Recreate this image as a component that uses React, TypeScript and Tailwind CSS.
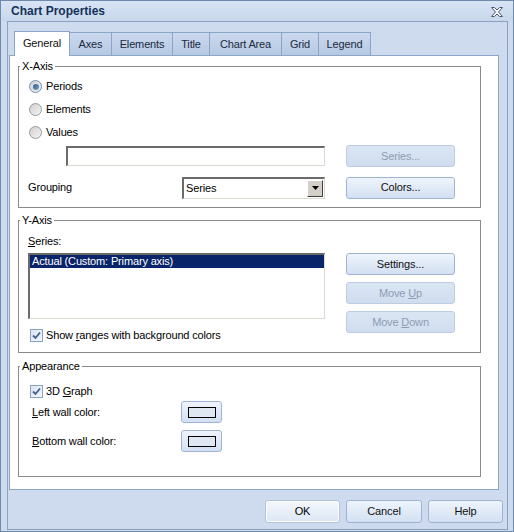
import React from "react";

const font = "font-['Liberation_Sans',Arial,sans-serif]";

function Btn({
  children,
  disabled,
  className = "",
}: {
  children: React.ReactNode;
  disabled?: boolean;
  className?: string;
}) {
  const look = disabled
    ? "border-[#bccce2] bg-linear-to-b from-[#dbe6f4] to-[#d0ddef] text-[#8d9cb2]"
    : "border-[#9fb4d3] bg-linear-to-b from-[#eef4fc] to-[#d3e0f2] text-[#111]";
  return (
    <div
      className={`flex h-[22px] items-center justify-center rounded-[3px] border ${look} ${className}`}
    >
      {children}
    </div>
  );
}

function Radio({ checked }: { checked?: boolean }) {
  return (
    <span
      className={`flex h-[13px] w-[13px] items-center justify-center rounded-full border ${
        checked ? "border-[#6f8db3]" : "border-[#9a9a9a]"
      } bg-linear-to-br from-[#cfcfcf] to-[#f4f4f4]`}
    >
      {checked && (
        <span className="h-[6px] w-[6px] rounded-full bg-linear-to-br from-[#2f5a8c] to-[#7ea2c9]" />
      )}
    </span>
  );
}

function Check() {
  return (
    <span className="flex h-[13px] w-[13px] items-center justify-center border border-[#8ea4c2] bg-linear-to-br from-[#d9e3f0] to-[#f4f7fb]">
      <svg width="9" height="9" viewBox="0 0 9 9">
        <path d="M1 4.5 L3.5 7 L8 1.5" fill="none" stroke="#40618f" strokeWidth="1.8" />
      </svg>
    </span>
  );
}

function Group({
  title,
  className = "",
  children,
}: {
  title: string;
  className?: string;
  children: React.ReactNode;
}) {
  return (
    <div className={`relative ml-[8px] w-[463px] border border-[#8a8a8a] ${className}`}>
      <span className="absolute -top-[7px] left-[1px] bg-white px-[2px] leading-[13px]">
        {title}
      </span>
      {children}
    </div>
  );
}

function ColorSwatch() {
  return (
    <div className="flex h-[22px] w-[41px] items-center justify-center rounded-[3px] border border-[#9fb4d3] bg-linear-to-b from-[#eef4fc] to-[#d3e0f2]">
      <span className="h-[11px] w-[28px] border border-black bg-[#dfe7f3]" />
    </div>
  );
}

const tabs: { label: string; w: string }[] = [
  { label: "General", w: "w-[56px]" },
  { label: "Axes", w: "w-[43px]" },
  { label: "Elements", w: "w-[62px]" },
  { label: "Title", w: "w-[38px]" },
  { label: "Chart Area", w: "w-[73px]" },
  { label: "Grid", w: "w-[38px]" },
  { label: "Legend", w: "w-[53px]" },
];

export default function App() {
  return (
    <div
      className={`${font} flex h-[532px] w-[514px] flex-col border border-[#6f89ad] bg-[#cedbee] text-[11px] tracking-[-0.15px] text-black`}
    >
      {/* title bar */}
      <div className="flex h-[20px] items-center justify-between bg-linear-to-b from-[#d8e4f4] to-[#c8d7ec] pl-[10px] pr-[10px]">
        <span className="text-[12px] font-bold tracking-normal text-[#15315a]">Chart Properties</span>
        <svg width="12" height="10" viewBox="0 0 12 10" className="mt-[1px]">
          <polygon
            points="0.5,0.5 3.5,0.5 6,3 8.5,0.5 11.5,0.5 7.5,5 11.5,9.5 8.5,9.5 6,7 3.5,9.5 0.5,9.5 4.5,5"
            fill="#f4f6f9"
            stroke="#4b5a70"
            strokeWidth="1"
          />
        </svg>
      </div>

      {/* dialog frame */}
      <div className="mb-[1px] ml-[6px] mr-[5px] flex flex-1 flex-col border border-[#8aa1c2]">
        {/* tab strip */}
        <div className="flex h-[33px] items-end pl-[6px]">
          {tabs.map((t, i) =>
            i === 0 ? (
              <div
                key={t.label}
                className={`${t.w} relative z-10 -mb-px flex h-[25px] items-center justify-center border border-b-0 border-[#8ba5c9] bg-white pb-[1px] text-[#111]`}
              >
                {t.label}
              </div>
            ) : (
              <div
                key={t.label}
                className={`${t.w} -ml-px flex h-[23px] items-center justify-center border border-b-0 border-[#8ba5c9] bg-linear-to-b from-[#cad9ee] to-[#b6c9e4] text-[#1a2a40]`}
              >
                {t.label}
              </div>
            )
          )}
        </div>

        {/* tab page */}
        <div className="ml-[1px] mr-[8px] h-[435px] border border-[#8ba5c9] bg-white">
          {/* X-Axis */}
          <Group title="X-Axis" className="mt-[10px] h-[142px]">
            <div className="pt-[8px]">
              {[
                { l: "Periods", c: true },
                { l: "Elements", c: false },
                { l: "Values", c: false },
              ].map((r) => (
                <div key={r.l} className="flex h-[23px] items-center gap-[4px] pl-[10px]">
                  <Radio checked={r.c} />
                  <span>{r.l}</span>
                </div>
              ))}
            </div>
            <div className="mt-[1px] flex h-[22px] items-center pl-[9px]">
              <div className="ml-[38px] h-[20px] w-[259px] border-l-2 border-t-2 border-b border-r border-l-[#6b6b6b] border-t-[#6b6b6b] border-b-[#dcd9d0] border-r-[#dcd9d0] bg-white" />
              <Btn disabled className="ml-[21px] w-[109px]">
                Series...
              </Btn>
            </div>
            <div className="mt-[9px] flex h-[23px] items-center pl-[9px]">
              <span className="w-[154px]">Grouping</span>
              <div className="flex h-[22px] w-[143px] items-stretch border-l-2 border-t-2 border-b border-r border-l-[#6b6b6b] border-t-[#6b6b6b] border-b-[#dcd9d0] border-r-[#dcd9d0] bg-white">
                <span className="flex flex-1 items-center pl-[2px]">Series</span>
                <span className="my-[1px] mr-[1px] flex w-[16px] items-center justify-center border border-l-white border-t-white border-b-[#404040] border-r-[#404040] bg-[#d4d0c8]">
                  <svg width="7" height="4" viewBox="0 0 7 4">
                    <polygon points="0,0 7,0 3.5,4" fill="#000" />
                  </svg>
                </span>
              </div>
              <Btn className="ml-[21px] w-[109px]">Colors...</Btn>
            </div>
          </Group>

          {/* Y-Axis */}
          <Group title="Y-Axis" className="mt-[12px] h-[133px]">
            <div className="flex pl-[9px]">
              <div className="w-[297px] pt-[13px]">
                <div className="mb-[5px] h-[14px] leading-[14px]">
                  <span className="underline">S</span>eries:
                </div>
                <div className="h-[66px] border-l-2 border-t-2 border-b border-r border-l-[#6b6b6b] border-t-[#6b6b6b] border-b-[#dcd9d0] border-r-[#dcd9d0] bg-white">
                  <div className="flex h-[13px] items-center bg-[#0a246a] pl-[2px] text-white">
                    Actual (Custom: Primary axis)
                  </div>
                </div>
                <div className="mt-[8px] flex h-[16px] items-center gap-[3px] pl-[2px]">
                  <Check />
                  <span>
                    Show <span className="underline">r</span>anges with background colors
                  </span>
                </div>
              </div>
              <div className="ml-[21px] flex w-[109px] flex-col gap-[7px] pt-[32px]">
                <Btn>Settings...</Btn>
                <Btn disabled>
                  <span>
                    Move <span className="underline">U</span>p
                  </span>
                </Btn>
                <Btn disabled>
                  <span>
                    Move <span className="underline">D</span>own
                  </span>
                </Btn>
              </div>
            </div>
          </Group>

          {/* Appearance */}
          <Group title="Appearance" className="mt-[13px] h-[111px]">
            <div className="pt-[16px]">
              <div className="flex h-[16px] items-center gap-[3px] pl-[11px]">
                <Check />
                <span>
                  3D <span className="underline">G</span>raph
                </span>
              </div>
              <div className="mt-[2px] flex h-[22px] items-center pl-[13px]">
                <span className="w-[149px]">
                  <span className="underline">L</span>eft wall color:
                </span>
                <ColorSwatch />
              </div>
              <div className="mt-[7px] flex h-[22px] items-center pl-[13px]">
                <span className="w-[149px]">
                  <span className="underline">B</span>ottom wall color:
                </span>
                <ColorSwatch />
              </div>
            </div>
          </Group>
        </div>

        {/* dialog buttons */}
        <div className="mt-[10px] flex justify-end gap-[6px] pr-[4px]">
          <div className="flex h-[23px] w-[75px] items-center justify-center rounded-[3px] border border-[#b3c4dc] bg-linear-to-b from-[#f4f8fd] to-[#dce6f4] shadow-[inset_0_0_0_1px_#ffffff]">
            OK
          </div>
          <Btn className="h-[23px] w-[76px]">Cancel</Btn>
          <Btn className="h-[23px] w-[75px]">Help</Btn>
        </div>
      </div>
    </div>
  );
}
